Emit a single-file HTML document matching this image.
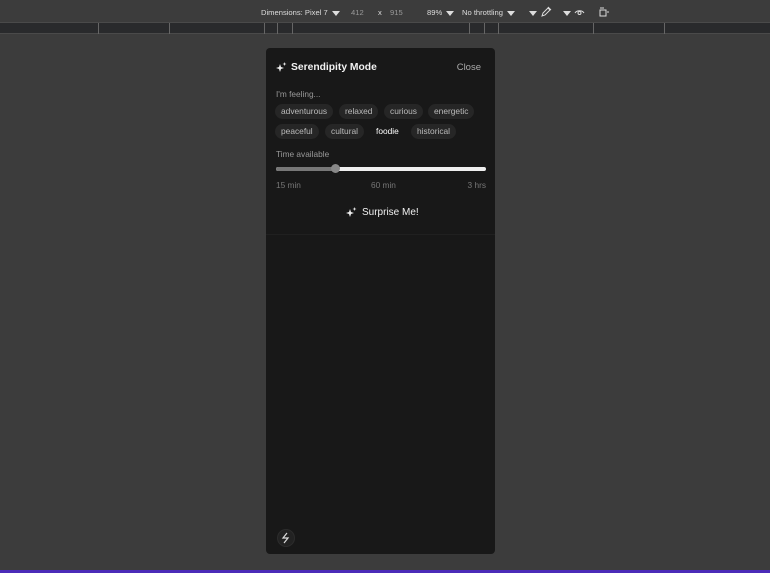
<!DOCTYPE html>
<html><head><meta charset="utf-8"><style>
*{margin:0;padding:0;box-sizing:border-box}
body{width:770px;height:573px;background:#3c3c3c;font-family:"Liberation Sans",sans-serif;position:relative;overflow:hidden}
.tb{position:absolute;top:0;left:0;width:770px;height:22px;font-size:7.6px;color:#ddd}
.tb span{position:absolute;top:8px}
.tri{display:inline-block;width:0;height:0;border-left:4px solid transparent;border-right:4px solid transparent;border-top:5px solid #ddd;vertical-align:middle;margin-left:4px}
.ruler{position:absolute;top:22px;left:0;width:770px;height:12px;background:#292a2c;border-top:1px solid #4a4a4a;border-bottom:1px solid #4a4a4a}
.ruler i{position:absolute;top:0;width:1px;height:11px;background:#666}
.panel{position:absolute;left:266px;top:48px;width:229px;height:506px;background:#181818;border-radius:4px;color:#eee}
.title{position:absolute;left:25px;top:14px;font-size:10.3px;font-weight:bold;color:#f2f2f2}
.close{position:absolute;right:14px;top:14px;font-size:9.5px;color:#aaa}
.lbl{position:absolute;left:10px;font-size:8.3px;color:#999}
.chip{position:absolute;height:15px;line-height:15px;padding:0 6px;background:#262626;border-radius:8px;font-size:8.4px;color:#bbb}
.sl{position:absolute;left:10px;top:119px;width:210px;height:4px;border-radius:2px;background:#eee}
.sl b{position:absolute;left:0;top:0;width:60px;height:4px;border-radius:2px;background:#777}
.sl em{position:absolute;left:55px;top:-3px;width:9px;height:9px;border-radius:50%;background:#888}
.tick{position:absolute;top:132px;font-size:8.3px;color:#777}
.sur{position:absolute;top:158px;font-size:10px;color:#f0f0f0}
.sep{position:absolute;left:0;top:186px;width:229px;height:1px;background:#202020}
.bolt{position:absolute;left:11px;top:481px;width:18px;height:18px;border-radius:50%;background:#222;border:1px solid #2c2c2c}
.purple{position:absolute;left:0;top:570px;width:770px;height:3px;background:#4b2bb8}
</style></head><body>
<div class="tb">
<span style="left:261px">Dimensions: Pixel 7<i class="tri"></i></span>
<span style="left:351px;color:#999">412</span>
<span style="left:378px">x</span>
<span style="left:390px;color:#999">915</span>
<span style="left:427px">89%<i class="tri"></i></span>
<span style="left:462px">No throttling<i class="tri"></i></span>
<span style="left:525px"><i class="tri"></i></span>
<svg style="position:absolute;left:541px;top:6px" width="11" height="11" viewBox="0 0 11 11" fill="none" stroke="#ddd" stroke-width="1"><path d="M1 10l1-3 5-5 2 2-5 5z M7 1l3 3"/></svg>
<span style="left:559px"><i class="tri"></i></span>
<svg style="position:absolute;left:574px;top:8px" width="11" height="7" viewBox="0 0 11 7" fill="none" stroke="#ddd"><path d="M1 5a5 4 0 0 1 9 0"/><circle cx="5.5" cy="5" r="1.5"/></svg>
<svg style="position:absolute;left:599px;top:7px" width="11" height="10" viewBox="0 0 11 10" fill="none" stroke="#ddd"><rect x="1" y="3" width="6" height="6"/><path d="M1 1h4M8 5h2"/></svg>
</div>
<div class="ruler">
<i style="left:98px"></i><i style="left:169px"></i><i style="left:264px"></i><i style="left:277px"></i><i style="left:292px"></i><i style="left:469px"></i><i style="left:484px"></i><i style="left:498px"></i><i style="left:593px"></i><i style="left:664px"></i>
</div>
<div class="panel">
<svg style="position:absolute;left:10px;top:14px" width="11" height="11" viewBox="0 0 11 11" fill="#eee"><path d="M4 2l1 3 3 1-3 1-1 3-1-3-3-1 3-1z"/><path d="M8.5 0l.5 1.5 1.5.5-1.5.5-.5 1.5-.5-1.5-1.5-.5 1.5-.5z"/></svg>
<div class="title">Serendipity Mode</div>
<div class="close">Close</div>
<div class="lbl" style="top:41px">I'm feeling...</div>
<div class="chip" style="left:9px;top:56px">adventurous</div>
<div class="chip" style="left:73px;top:56px">relaxed</div>
<div class="chip" style="left:118px;top:56px">curious</div>
<div class="chip" style="left:162px;top:56px">energetic</div>
<div class="chip" style="left:9px;top:76px">peaceful</div>
<div class="chip" style="left:59px;top:76px">cultural</div>
<div class="chip" style="left:104px;top:76px;background:none;color:#fff">foodie</div>
<div class="chip" style="left:145px;top:76px">historical</div>
<div class="lbl" style="top:101px">Time available</div>
<div class="sl"><b></b><em></em></div>
<div class="tick" style="left:10px;top:132px">15 min</div>
<div class="tick" style="left:105px">60 min</div>
<div class="tick" style="right:9px">3 hrs</div>
<svg style="position:absolute;left:80px;top:159px" width="11" height="11" viewBox="0 0 11 11" fill="#eee"><path d="M4 2l1 3 3 1-3 1-1 3-1-3-3-1 3-1z"/><path d="M8.5 0l.5 1.5 1.5.5-1.5.5-.5 1.5-.5-1.5-1.5-.5 1.5-.5z"/></svg>
<div class="sur" style="left:96px;top:159px">Surprise Me!</div>
<div class="sep"></div>
<div class="bolt"><svg width="16" height="16" viewBox="0 0 16 16" fill="none" stroke="#ddd" stroke-width="1.2"><path d="M9 3l-4 5h5l-4 5"/></svg></div>
</div>
<div class="purple"></div>
</body></html>
